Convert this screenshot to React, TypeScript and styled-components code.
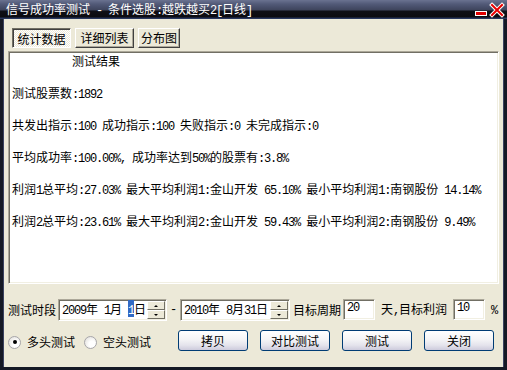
import React from 'react';
import styled, { createGlobalStyle } from 'styled-components';

const GlobalStyle = createGlobalStyle`
  html, body {
    margin: 0;
    padding: 0;
    background: #ece9d8;
  }
  body {
    font-family: "Noto Sans CJK SC", sans-serif;
    font-size: 12px;
    color: #000;
  }
`;

const Window = styled.div`
  width: 507px;
  height: 370px;
  display: flex;
  flex-direction: column;
  overflow: hidden;
`;

const TitleBar = styled.div`
  height: 19px;
  flex: none;
  display: flex;
  align-items: center;
  padding: 0 2px 0 6px;
  color: #fff;
  background: linear-gradient(
    to bottom,
    #6a7290 0px,
    #525a78 4px,
    #3e445c 10px,
    #0e0f16 11px,
    #0b0b10 17px,
    #26345a 18px,
    #2c3c64 19px
  );
`;

const TitleText = styled.div`
  flex: 1;
  white-space: pre;
  line-height: 12px;
  margin-top: 1px;
`;

const Body = styled.div`
  flex: 1;
  display: flex;
  flex-direction: column;
  background: #ece9d8;
  border: 3px solid #151925;
  border-top: none;
  padding: 9px 1px 0 2px;
  box-shadow: inset 1px 0 #3b4260, inset -1px 0 #3b4260;
`;

const Latin = styled.span`
  font-family: "Liberation Mono", monospace;
  font-size: 12px;
  letter-spacing: -1.2px;
  white-space: pre;
`;

const Sel = styled.span`
  background: #316ac5;
  color: #fff;
`;

function Mixed({ s }: { s: string }) {
  const parts = s.split(/([\x00-\x7f]+)/);
  return (
    <>
      {parts.map((p, i) => (i % 2 ? <Latin key={i}>{p}</Latin> : p))}
    </>
  );
}

const TabRow = styled.div`
  display: flex;
  gap: 4px;
  margin-left: 7px;
  height: 20px;
`;

const Tab = styled.div<{ $active?: boolean; $w: number }>`
  width: ${(p) => p.$w}px;
  box-sizing: border-box;
  height: 20px;
  display: flex;
  align-items: center;
  justify-content: center;
  line-height: 12px;
  border: 1px solid;
  border-color: ${(p) =>
    p.$active ? '#716f64 #ffffff #ffffff #716f64' : '#ffffff #404040 #404040 #ffffff'};
  box-shadow: ${(p) =>
    p.$active ? 'inset 1px 1px #404040' : 'inset -1px -1px #aca899'};
  background: ${(p) =>
    p.$active
      ? 'repeating-conic-gradient(#ffffff 0 25%, #ece9d8 0 50%) 0 0 / 2px 2px'
      : '#ece9d8'};
  padding-top: ${(p) => (p.$active ? '1px' : '0')};
`;

const sunken = `
  border: 1px solid;
  border-color: #aca899 #ffffff #ffffff #aca899;
  box-shadow: inset 1px 1px #716f64, inset -1px -1px #f1efe2;
  background: #fff;
  box-sizing: border-box;
`;

const ResultBox = styled.div`
  ${sunken}
  margin: 3px 4px 0 3px;
  height: 233px;
  padding: 3px 0 0 3px;
  display: flex;
  flex-direction: column;
  gap: 20px;
`;

const ResultLine = styled.div`
  line-height: 12px;
  height: 12px;
  white-space: pre;
`;

const ControlRow = styled.div`
  display: flex;
  align-items: center;
  height: 22px;
  margin-top: 15px;
  margin-left: 3px;
`;

const Label = styled.span<{ $gap?: number }>`
  white-space: pre;
  line-height: 12px;
  margin-right: ${(p) => p.$gap ?? 0}px;
`;

const DateBox = styled.div<{ $w: number }>`
  ${sunken}
  width: ${(p) => p.$w}px;
  height: 22px;
  display: flex;
  align-items: center;
  padding: 0 1px 0 3px;
`;

const DateText = styled.div`
  flex: 1;
  white-space: pre;
  line-height: 13px;
`;

const Spinner = styled.div`
  width: 18px;
  height: 18px;
  display: flex;
  flex-direction: column;
`;

const SpinBtn = styled.div<{ $down?: boolean }>`
  flex: 1;
  box-sizing: border-box;
  border: 1px solid;
  border-color: #ffffff #716f64 #716f64 #ffffff;
  background: #ece9d8;
  display: flex;
  align-items: center;
  justify-content: center;
  &::after {
    content: '';
    width: 0;
    height: 0;
    border-left: 2px solid transparent;
    border-right: 2px solid transparent;
    ${(p) => (p.$down ? 'border-top: 2px solid #000;' : 'border-bottom: 2px solid #000;')}
  }
`;

const Dash = styled.span`
  width: 13px;
  text-align: center;
  font-family: "Liberation Mono", monospace;
  font-size: 12px;
`;

const NumInput = styled.div`
  ${sunken}
  width: 32px;
  height: 21px;
  padding: 2px 0 0 3px;
  align-self: flex-start;
  font-family: "Liberation Mono", monospace;
  font-size: 12px;
  letter-spacing: -1.2px;
  line-height: 12px;
`;

const ActionRow = styled.div`
  display: flex;
  align-items: center;
  height: 21px;
  margin-top: 9px;
`;

const RadioGroup = styled.div`
  width: 173px;
  display: flex;
  align-items: center;
  padding-top: 3px;
  padding-left: 3px;
  box-sizing: border-box;
`;

const RadioItem = styled.label`
  display: flex;
  align-items: center;
  gap: 6px;
  margin-right: 9px;
  line-height: 12px;
`;

const RadioCircle = styled.span<{ $on?: boolean }>`
  width: 11px;
  height: 11px;
  border-radius: 50%;
  border: 1px solid #a7a6aa;
  background: radial-gradient(circle at 65% 65%, #ffffff 30%, #dcdad5 100%);
  display: flex;
  align-items: center;
  justify-content: center;
  &::after {
    content: '';
    width: 4px;
    height: 4px;
    border-radius: 50%;
    background: ${(p) => (p.$on ? '#000' : 'transparent')};
  }
`;

const ButtonGroup = styled.div`
  display: flex;
  gap: 12px;
`;

const Button = styled.div`
  width: 70px;
  height: 21px;
  box-sizing: border-box;
  border: 1px solid #003c74;
  border-radius: 3px;
  background: linear-gradient(to bottom, #ffffff 0%, #f4f4f6 45%, #e4e3ec 75%, #cdcbdc 100%);
  display: flex;
  align-items: center;
  justify-content: center;
  line-height: 12px;
`;

function WindowButtons() {
  return (
    <svg width="30" height="19" viewBox="0 0 30 19">
      <rect x="0.5" y="11.5" width="11" height="4" fill="#e00000" stroke="#ffffff" strokeWidth="1" />
      <path d="M17 5 L27 15 M27 5 L17 15" stroke="#ffffff" strokeWidth="4" strokeLinecap="square" />
      <path d="M17 5 L27 15 M27 5 L17 15" stroke="#e80000" strokeWidth="2" strokeLinecap="square" />
    </svg>
  );
}

const results = [
  '          测试结果',
  '测试股票数:1892',
  '共发出指示:100 成功指示:100 失败指示:0 未完成指示:0',
  '平均成功率:100.00%, 成功率达到50%的股票有:3.8%',
  '利润1总平均:27.03% 最大平均利润1:金山开发 65.10% 最小平均利润1:南钢股份 14.14%',
  '利润2总平均:23.61% 最大平均利润2:金山开发 59.43% 最小平均利润2:南钢股份 9.49%',
];

export default function App() {
  return (
    <Window>
      <GlobalStyle />
      <TitleBar>
        <TitleText>
          <Mixed s="信号成功率测试 - 条件选股:越跌越买2[日线]" />
        </TitleText>
        <WindowButtons />
      </TitleBar>
      <Body>
        <TabRow>
          <Tab $active $w={59}>统计数据</Tab>
          <Tab $w={59}>详细列表</Tab>
          <Tab $w={42}>分布图</Tab>
        </TabRow>
        <ResultBox>
          {results.map((r, i) => (
            <ResultLine key={i}>
              <Mixed s={r} />
            </ResultLine>
          ))}
        </ResultBox>
        <ControlRow>
          <Label $gap={2}>测试时段</Label>
          <DateBox $w={109}>
            <DateText>
              <Mixed s="2009年 1月 " />
              <Sel>
                <Latin>1</Latin>
              </Sel>
              日
            </DateText>
            <Spinner>
              <SpinBtn />
              <SpinBtn $down />
            </Spinner>
          </DateBox>
          <Dash>-</Dash>
          <DateBox $w={110}>
            <DateText>
              <Mixed s="2010年 8月31日" />
            </DateText>
            <Spinner>
              <SpinBtn />
              <SpinBtn $down />
            </Spinner>
          </DateBox>
          <Label style={{ marginLeft: 3 }} $gap={2}>
            目标周期
          </Label>
          <NumInput>20</NumInput>
          <Label style={{ marginLeft: 6 }} $gap={6}>
            <Mixed s="天,目标利润" />
          </Label>
          <NumInput>10</NumInput>
          <Label style={{ marginLeft: 6 }}>
            <Latin>%</Latin>
          </Label>
        </ControlRow>
        <ActionRow>
          <RadioGroup>
            <RadioItem>
              <RadioCircle $on />
              多头测试
            </RadioItem>
            <RadioItem>
              <RadioCircle />
              空头测试
            </RadioItem>
          </RadioGroup>
          <ButtonGroup>
            <Button>拷贝</Button>
            <Button>对比测试</Button>
            <Button>测试</Button>
            <Button>关闭</Button>
          </ButtonGroup>
        </ActionRow>
      </Body>
    </Window>
  );
}
